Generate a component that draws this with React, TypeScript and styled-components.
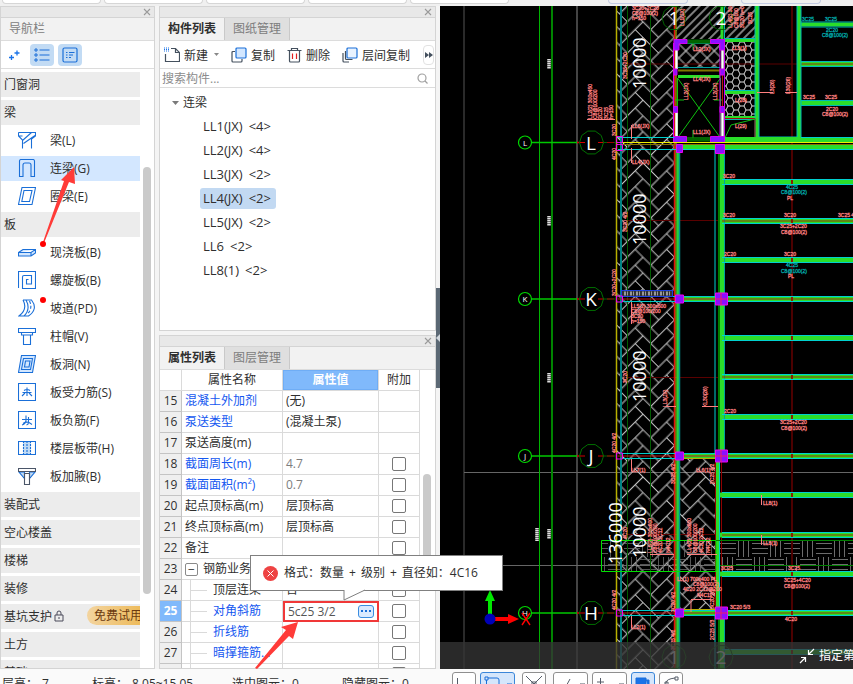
import React from "react";
import styled, { createGlobalStyle, css } from "styled-components";

const GlobalStyle = createGlobalStyle`
  * { box-sizing: border-box; }
  body { margin: 0; background: #f4f4f4; }
  body, button, input {
    font-family: "Open Sans", "Noto Sans CJK SC", sans-serif;
    font-size: 12px;
    color: #2f2f2f;
  }
  button, input { margin: 0; padding: 0; border: 0; background: none; }
`;

/* ---------- page frame ---------- */

const Page = styled.div`
  position: relative;
  display: grid;
  grid-template-rows: 6px minmax(0, 1fr) 15px;
  height: 100vh;
  overflow: hidden;
  line-height: 18px;
`;

const Ribbon = styled.header`
  display: flex;
  gap: 3px;
  padding: 0 0 2px 2px;
  background: #f0f0f0;
  overflow: hidden;
`;

const RibbonCard = styled.div<{ $accent?: boolean; $push?: number }>`
  flex: 0 0 ${(p) => (p.$accent ? 80 : 99)}px;
  margin-left: ${(p) => p.$push ?? 0}px;
  border: 1px solid ${(p) => (p.$accent ? "#c3cbe2" : "#d6d6d6")};
  border-top: 0;
  border-radius: 0 0 4px 4px;
  background: ${(p) => (p.$accent ? "#f0f0f0" : "#fff")};
`;

const Workspace = styled.main`
  display: flex;
  min-height: 0;
`;

const Panel = styled.section`
  display: flex;
  flex-direction: column;
  min-height: 0;
  overflow: hidden;
  border: 1px solid #d4d4d4;
  background: #fff;
`;

const CloseBar = styled.div`
  flex: 0 0 11px;
  display: flex;
  justify-content: flex-end;
  align-items: center;
  padding-right: 3px;
  background: #e8e8e8;
  border-bottom: 1px solid #d4d4d4;
`;

const CloseButton = styled.button`
  display: flex;
  color: #9a9a9a;
`;

function Closer({ label }: { label: string }) {
  return (
    <CloseBar>
      <CloseButton aria-label={label}>
        <svg width="8" height="8" viewBox="0 0 8 8" stroke="currentColor" strokeWidth="1.1">
          <path d="M1 1l6 6M7 1L1 7" />
        </svg>
      </CloseButton>
    </CloseBar>
  );
}

/* ---------- navigation panel ---------- */

const NavPanel = styled(Panel)`
  flex: 0 0 155px;
`;

const NavTitle = styled.h2`
  flex: 0 0 22px;
  margin: 0;
  padding-left: 8px;
  border-bottom: 1px solid #dcdcdc;
  background: #f2f2f2;
  color: #808080;
  font-size: 12px;
  font-weight: 400;
  line-height: 22px;
`;

const NavTools = styled.div`
  flex: 0 0 28px;
  display: flex;
  align-items: center;
  gap: 4px;
  padding-left: 1px;
  border-bottom: 1px solid #dcdcdc;
`;

const NavTool = styled.button<{ $on?: boolean }>`
  display: grid;
  place-items: center;
  width: 24px;
  height: 22px;
  border-radius: 4px;
  background: ${(p) => (p.$on ? "#c2dbf4" : "transparent")};
`;

const NavBody = styled.div`
  flex: 1;
  display: flex;
  min-height: 0;
  overflow: hidden;
`;

const NavList = styled.div`
  flex: 1;
  display: flex;
  flex-direction: column;
  gap: 3px;
  padding-top: 3px;
`;

const NavGroup = styled.button`
  flex: 0 0 25px;
  display: flex;
  align-items: center;
  gap: 2px;
  padding: 0 0 2px 3px;
  overflow: hidden;
  background: #ececec;
  text-align: left;
`;

const NavItem = styled.button<{ $active?: boolean }>`
  flex: 0 0 25px;
  display: flex;
  align-items: center;
  gap: 14px;
  padding: 0 0 2px 17px;
  background: ${(p) => (p.$active ? "#d3e7ff" : "#fff")};
  text-align: left;
`;

const NavIcon = styled.svg`
  width: 18px;
  height: 18px;
  fill: none;
  stroke: #1a6fd8;
  stroke-width: 1.1;
`;

const TrialTag = styled.span`
  margin-left: auto;
  flex: 0 0 53px;
  height: 19px;
  padding-left: 7px;
  border-radius: 10px 0 0 10px;
  background: linear-gradient(90deg, #f3d49f, #edbb5c);
  color: #6b3a10;
  line-height: 19px;
  white-space: nowrap;
  overflow: hidden;
`;

const ScrollTrack = styled.div<{ $top: number; $pad: number }>`
  flex: 0 0 auto;
  padding: ${(p) => p.$top}px ${(p) => p.$pad}px 0 3px;
`;

const ScrollThumb = styled.div<{ $size: number }>`
  width: 8px;
  height: ${(p) => p.$size}px;
  border-radius: 4px;
  background: #cacaca;
`;

const navIcons: Record<string, React.ReactNode> = {
  beam: <path d="M.5 1.500h17v3.500l-4 3v9.500M4.500 17.500V9L.500 5V1.500M4.500 9.500L13.500 1.500M5.500 12.500L17 4.500M.500 5h4" />,
  link: <path d="M1.500 17.500V2q0-1.500 1.500-1.500h12q1.500 0 1.500 1.500v15.500h-3.500V6q0-2-2-2H7q-2 0-2 2v11.500z" />,
  ring: <path d="M4 .5h13.500l-3.500 17H.500zM6 3.500h8l-2.500 11H3.800z" />,
  slab: <path fill="#d3e7ff" d="M.5 9.500L5 6.500h12.500L13 9.500zM.500 9.500v3.500H13l4.500-3V6.500M13 9.500V13" />,
  spiral: <path d="M.5 17V.5h17v17H4.500V6q0-1.500 1.500-1.500h7.500V13H8.500V8.500h2" />,
  ramp: (
    <>
      <path d="M5 1q5 9-4 16h9.500q10-7 3-16H5M8 1q5 9-2 16" />
      <path strokeDasharray="3 2" d="M11.500 2q3.500 7-2 13" />
    </>
  ),
  cap: <path d="M.5 1.500h17v4H.500zM3.500 5.500v2.500h11V5.500M5.500 8v9.500h7V8" />,
  hole: <path fill="#d3e7ff" d="M3.500 .5h14l-3 17H.5zM5.500 3.500h9l-2 11H3.500zM7.500 6h4.500l-1 6H6.500z" />,
  rebarS: <path d="M.5.5h17v17H.5zM4 13l3-3M14 13l-3-3M4.500 9.500h9M6 7.500q3-2 6 0M9 4.500V13" />,
  rebarF: <path d="M.5.5h17v17H.5zM4 8.500h10M4 14q4-1 4-5V4.500M5 12.500q3-2 6-1l3 2M10.500 6v5.500q0 2-2 2.500" />,
  strip: (
    <>
      <path fill="#c2dbf4" stroke="none" d="M5 2.500h8v13H5z" />
      <path d="M4 2.500H.500v13H4M14 2.500h3.500v13H14M.500 2.500h17M.500 15.500h17" />
      <path strokeDasharray="2 1" d="M5.500 2v14M9 2v14M12.500 2v14" />
    </>
  ),
  haunch: (
    <>
      <path fill="#c2dbf4" d="M1 5h5.500v6.500zM17 5h-5.500v6.500z" />
      <path stroke="#4a5568" d="M.5 1.500h17v3H.500zM6.500 6.500v11h5v-11z" />
    </>
  ),
};

type NavEntry = { text: string; icon?: string; active?: boolean; locked?: boolean };

const navEntries: NavEntry[] = [
  { text: "门窗洞" },
  { text: "梁" },
  { text: "梁(L)", icon: "beam" },
  { text: "连梁(G)", icon: "link", active: true },
  { text: "圈梁(E)", icon: "ring" },
  { text: "板" },
  { text: "现浇板(B)", icon: "slab" },
  { text: "螺旋板(B)", icon: "spiral" },
  { text: "坡道(PD)", icon: "ramp" },
  { text: "柱帽(V)", icon: "cap" },
  { text: "板洞(N)", icon: "hole" },
  { text: "板受力筋(S)", icon: "rebarS" },
  { text: "板负筋(F)", icon: "rebarF" },
  { text: "楼层板带(H)", icon: "strip" },
  { text: "板加腋(B)", icon: "haunch" },
  { text: "装配式" },
  { text: "空心楼盖" },
  { text: "楼梯" },
  { text: "装修" },
  { text: "基坑支护", locked: true },
  { text: "土方" },
  { text: "基础" },
];

function Navigation() {
  return (
    <NavPanel aria-label="导航栏">
      <Closer label="关闭导航栏" />
      <NavTitle>导航栏</NavTitle>
      <NavTools>
        <NavTool aria-label="展开">
          <svg width="12" height="12" stroke="#1a73e8" strokeWidth="1.300">
            <path d="M1 8.500h5M3.500 6v5M6.500 4h5M9 1.500v5" />
          </svg>
        </NavTool>
        <NavTool $on aria-label="列表视图">
          <svg width="16" height="14" fill="none" stroke="#1a6fd8" strokeWidth="1.200">
            <path d="M5.500 2h10M5.500 7h10M5.500 12h10" />
            <path d="M1 1h2v2H1zM1 6h2v2H1zM1 11h2v2H1z" strokeWidth="1" />
          </svg>
        </NavTool>
        <NavTool $on aria-label="详细视图">
          <svg width="16" height="16" fill="none" stroke="#1a6fd8" strokeWidth="1.200">
            <rect x="1" y="1" width="14" height="14" rx="1.500" />
            <path d="M4 5.500h1.500M7 5.500h5.500M4 8h1.500M7 8h4M4 10.500h1.500M7 10.500h2" strokeWidth="1" />
          </svg>
        </NavTool>
      </NavTools>
      <NavBody>
        <NavList>
          {navEntries.map((e) =>
            e.icon ? (
              <NavItem key={e.text} $active={e.active}>
                <NavIcon viewBox="0 0 18 18">{navIcons[e.icon]}</NavIcon>
                {e.text}
              </NavItem>
            ) : (
              <NavGroup key={e.text}>
                {e.text}
                {e.locked && (
                  <>
                    <svg width="10" height="12" fill="none" stroke="#4a4a5a">
                      <path d="M1 5h8v6H1zM3 5V3q0-2 2-2t2 2v2M5 7v2" />
                    </svg>
                    <TrialTag>免费试用</TrialTag>
                  </>
                )}
              </NavGroup>
            ),
          )}
        </NavList>
        <ScrollTrack $top={98} $pad={3}>
          <ScrollThumb $size={427} />
        </ScrollTrack>
      </NavBody>
    </NavPanel>
  );
}

/* ---------- component list ---------- */

const MiddleColumn = styled.div`
  flex: 0 0 277px;
  display: grid;
  grid-template-rows: 325px minmax(0, 1fr);
  gap: 4px;
  margin-left: 4px;
`;

const TabBar = styled.div`
  flex: 0 0 23px;
  display: flex;
  border-bottom: 1px solid #dcdcdc;
  background: #f2f2f2;
`;

const Tab = styled.button<{ $active?: boolean }>`
  flex: 0 0 65px;
  border-right: 1px solid #c9c9c9;
  background: ${(p) => (p.$active ? "#f2f2f2" : "#dfdfdf")};
  color: ${(p) => (p.$active ? "#2f2f2f" : "#7d7d7d")};
  font-weight: ${(p) => (p.$active ? 700 : 400)};
  line-height: 22px;
  white-space: nowrap;
`;

const Toolbar = styled.div`
  flex: 0 0 28px;
  display: flex;
  align-items: center;
  gap: 12px;
  padding: 0 1px 0 4px;
  border-bottom: 1px solid #dcdcdc;
`;

const ToolButton = styled.button`
  display: flex;
  align-items: center;
  gap: 4px;
  white-space: nowrap;

  svg { fill: none; stroke: #44505e; stroke-width: 1.2; }
`;

const MoreButton = styled.button`
  display: grid;
  place-items: center;
  width: 11px;
  height: 20px;
  margin-left: auto;
  border: 1px solid #e2e2e2;
  border-radius: 4px;
`;

const SearchRow = styled.label`
  flex: 0 0 19px;
  display: flex;
  align-items: center;
  padding: 0 7px 0 2px;
  border-bottom: 1px solid #dcdcdc;

  input { flex: 1; min-width: 0; outline: 0; }
  input::placeholder { color: #8c8c8c; opacity: 1; }
`;

const Tree = styled.ul`
  display: flex;
  flex-direction: column;
  align-items: flex-start;
  margin: 0;
  padding: 4px 0 0 12px;
  list-style: none;
`;

const TreeRoot = styled.li`
  display: flex;
  align-items: center;
  gap: 4px;
  height: 22px;
  margin-bottom: 2px;
`;

const TreeLeaf = styled.li<{ $active?: boolean }>`
  display: flex;
  gap: 6px;
  height: 21px;
  margin: 0 0 3px 28px;
  padding: 0 5px 0 3px;
  border-radius: 3px;
  background: ${(p) => (p.$active ? "#c2d9f2" : "transparent")};
  font-size: 13px;
  line-height: 21px;
`;

const components = [
  ["LL1(JX)", "<4>"],
  ["LL2(JX)", "<4>"],
  ["LL3(JX)", "<2>"],
  ["LL4(JX)", "<2>"],
  ["LL5(JX)", "<2>"],
  ["LL6", "<2>"],
  ["LL8(1)", "<2>"],
];

function ComponentList() {
  return (
    <Panel aria-label="构件列表">
      <Closer label="关闭构件列表" />
      <TabBar>
        <Tab $active>构件列表</Tab>
        <Tab>图纸管理</Tab>
      </TabBar>
      <Toolbar>
        <ToolButton>
          <svg width="16" height="16" viewBox="0 0 16 16">
            <path d="M7 1.500h4.500l4 4v9h-14V7M11.500 1.500v4h4" />
            <path stroke="#1a73e8" strokeDasharray="1 1" d="M0 1h5M0 2.500h5M0 4h5" />
          </svg>
          新建
          <svg width="7" height="4" viewBox="0 0 7 4">
            <path d="M2 0h5L4.500 3z" fill="#888" stroke="none" />
          </svg>
        </ToolButton>
        <ToolButton>
          <svg width="16" height="16" viewBox="0 0 16 16">
            <path d="M4 4.500H2q-1 0-1 1V14q0 1 1 1h8q1 0 1-1v-2" />
            <rect x="5" y="1" width="10" height="10" rx="1" fill="#d3e7ff" stroke="#1a6fd8" />
          </svg>
          复制
        </ToolButton>
        <ToolButton>
          <svg width="15" height="16" viewBox="0 0 15 16">
            <path d="M.5 3.500h14M4.500 3.500v-2h6v2M2.500 3.500V14q0 1 1 1h8q1 0 1-1V3.500" />
            <path stroke="#e02020" d="M5.500 6.500v5.500M9.500 6.500v5.500" />
          </svg>
          删除
        </ToolButton>
        <ToolButton>
          <svg width="16" height="16" viewBox="0 0 16 16">
            <path d="M1 6v8q0 1 1 1h5M3.500 4v7.500q0 1 1 1h6" />
            <rect x="5" y="1" width="10" height="10" rx="1" fill="#e9f3ff" stroke="#1a6fd8" />
          </svg>
          层间复制
        </ToolButton>
        <MoreButton aria-label="更多">
          <svg width="8" height="6" fill="#44505e">
            <path d="M0 0l4 3-4 3zM4 0l4 3-4 3z" />
          </svg>
        </MoreButton>
      </Toolbar>
      <SearchRow>
        <input aria-label="搜索构件" placeholder="搜索构件..." />
        <svg width="11" height="11" fill="none" stroke="#a0a0a0" strokeWidth="1.200">
          <circle cx="5" cy="5" r="4" />
          <path d="M8 8l2.500 2.500" />
        </svg>
      </SearchRow>
      <Tree>
        <TreeRoot>
          <svg width="7" height="4" fill="#7a7a7a">
            <path d="M0 0h7L3.500 4z" />
          </svg>
          连梁
        </TreeRoot>
        {components.map(([name, count]) => (
          <TreeLeaf key={name} $active={name === "LL4(JX)"}>
            <span>{name}</span>
            <span>{count}</span>
          </TreeLeaf>
        ))}
      </Tree>
    </Panel>
  );
}

/* ---------- property table ---------- */

const TableArea = styled.div`
  flex: 1;
  display: flex;
  min-height: 0;
  overflow: hidden;
`;

const PropTable = styled.table`
  flex: 1;
  height: max-content;
  table-layout: fixed;
  border-collapse: separate;
  border-spacing: 0;

  tr { height: 21px; }
  th, td {
    height: 21px;
    padding: 0 3px;
    border-right: 1px solid #dadada;
    border-bottom: 1px solid #dadada;
    font-weight: 400;
    line-height: 18px;
    text-align: left;
    white-space: nowrap;
    overflow: hidden;
  }
  thead th { text-align: center; }
`;

const ValueHead = styled.th`
  && {
    background: #80b9fb;
    color: #fff;
    font-weight: 700;
    box-shadow: inset 0 0 0 1px #6fadf5;
  }
`;

const IndexCell = styled.th<{ $active?: boolean }>`
  && {
    padding: 0;
    text-align: center;
    border-color: #c4c4c4;
    background: #efefef;
    ${(p) =>
      p.$active &&
      css`
        background: #80b9fb;
        color: #fff;
        font-weight: 700;
      `}
  }
`;

const NameCell = styled.td<{ $blue?: boolean; $child?: boolean }>`
  && {
    padding-left: ${(p) => (p.$child ? 8 : 3)}px;
    color: ${(p) => (p.$blue ? "#1457f0" : "#2f2f2f")};
    line-height: ${(p) => (p.$child ? 20 : 18)}px;
    text-overflow: ellipsis;
  }
`;

const Branch = styled.span`
  display: inline-block;
  width: 17px;
  height: 20px;
  margin-right: 6px;
  border-left: 1px solid #dadada;
  vertical-align: top;
  background: linear-gradient(#dadada, #dadada) center / 100% 1px no-repeat;
`;

const Fold = styled.button`
  width: 13px;
  height: 13px;
  margin-right: 5px;
  border: 1px solid #8a8a8a;
  border-radius: 2px;
  line-height: 10px;
  vertical-align: middle;
`;

const ValueCell = styled.td<{ $muted?: boolean; $editing?: boolean }>`
  && {
    color: ${(p) => (p.$muted ? "#7d7d7d" : "#2f2f2f")};
    ${(p) =>
      p.$editing &&
      css`
        padding: 0;
        outline: 2px solid #f03838;
        outline-offset: -2px;
      `}
  }
`;

const Editor = styled.div`
  display: flex;
  align-items: center;
  justify-content: space-between;
  height: 20px;
  padding: 0 4px 0 5px;

  input { width: 64px; height: 18px; outline: 0; color: #555; }
`;

const DotsButton = styled.button`
  display: grid;
  place-items: center;
  width: 16px;
  height: 13px;
  border: 1px solid #3a8de0;
  border-radius: 3px;
  background: #d9eaff;
`;

const CheckCell = styled.td`
  && { text-align: center; line-height: 0; }
`;

const Check = styled.input`
  appearance: none;
  width: 14px;
  height: 14px;
  border: 1px solid #777;
  border-radius: 2px;
  background: #fff;
  vertical-align: middle;
`;

type Prop = { n: number; name: string; value?: string; blue?: boolean; muted?: boolean; check?: boolean; level?: "group" | "child" };

const props: Prop[] = [
  { n: 15, name: "混凝土外加剂", value: "(无)", blue: true },
  { n: 16, name: "泵送类型", value: "(混凝土泵)", blue: true },
  { n: 17, name: "泵送高度(m)" },
  { n: 18, name: "截面周长(m)", value: "4.7", blue: true, muted: true, check: true },
  { n: 19, name: "截面面积(m²)", value: "0.7", blue: true, muted: true, check: true },
  { n: 20, name: "起点顶标高(m)", value: "层顶标高", check: true },
  { n: 21, name: "终点顶标高(m)", value: "层顶标高", check: true },
  { n: 22, name: "备注", check: true },
  { n: 23, name: "钢筋业务属性", level: "group" },
  { n: 24, name: "顶层连梁", value: "否", level: "child", check: true },
  { n: 25, name: "对角斜筋", value: "5c25 3/2", blue: true, level: "child", check: true },
  { n: 26, name: "折线筋", blue: true, level: "child", check: true },
  { n: 27, name: "暗撑箍筋...", blue: true, level: "child", check: true },
  { n: 28, name: "", level: "child", check: true },
];

function PropertyPanel() {
  return (
    <Panel aria-label="属性列表">
      <Closer label="关闭属性列表" />
      <TabBar>
        <Tab $active>属性列表</Tab>
        <Tab>图层管理</Tab>
      </TabBar>
      <TableArea>
        <PropTable>
          <colgroup>
            <col width="22" />
            <col width="101" />
            <col width="96" />
            <col width="41" />
          </colgroup>
          <thead>
            <tr>
              <th />
              <th>属性名称</th>
              <ValueHead>属性值</ValueHead>
              <th>附加</th>
            </tr>
          </thead>
          <tbody>
            {props.map((p) => (
              <tr key={p.n}>
                <IndexCell $active={p.n === 25}>{p.n < 28 ? p.n : ""}</IndexCell>
                <NameCell $blue={p.blue} $child={p.level === "child"}>
                  {p.level === "group" && <Fold aria-label="折叠">−</Fold>}
                  {p.level === "child" && <Branch />}
                  {p.name}
                </NameCell>
                <ValueCell $muted={p.muted} $editing={p.n === 25}>
                  {p.n === 25 ? (
                    <Editor>
                      <input aria-label={p.name} defaultValue={p.value} />
                      <DotsButton aria-label="更多选项">
                        <svg width="10" height="2" fill="#1a6fd8">
                          <path d="M0 0h2v2H0zM4 0h2v2H4zM8 0h2v2H8z" />
                        </svg>
                      </DotsButton>
                    </Editor>
                  ) : (
                    p.value
                  )}
                </ValueCell>
                <CheckCell>{p.check && <Check type="checkbox" aria-label={`附加 ${p.name}`} />}</CheckCell>
              </tr>
            ))}
          </tbody>
        </PropTable>
        <ScrollTrack $top={104} $pad={4}>
          <ScrollThumb $size={110} />
        </ScrollTrack>
      </TableArea>
    </Panel>
  );
}

/* ---------- drawing ---------- */

const Splitter = styled.div`
  flex: 0 0 4px;
  display: flex;
  align-items: center;
  background: #f4f4f4;
`;

const SplitHandle = styled.button`
  display: grid;
  place-items: center;
  width: 4px;
  height: 100px;
  background: #5b6874;
`;

const Viewport = styled.section`
  position: relative;
  flex: 1;
  min-width: 0;
  overflow: hidden;
  background: #000;
`;

const Drawing = styled.svg`
  display: block;
  width: 100%;
  height: 100%;
`;

const HintBar = styled.div`
  position: absolute;
  inset: auto 0 0 0;
  display: flex;
  justify-content: flex-end;
  align-items: center;
  gap: 4px;
  height: 27px;
  background: rgba(52, 52, 52, 0.78);
  color: #fff;
  overflow: hidden;

  span { flex: 0 0 34px; white-space: nowrap; overflow: hidden; }
`;

const CadText = styled.text<{ $teal?: boolean }>`
  font-family: "Liberation Sans", sans-serif;
  font-size: 5px;
  fill: ${(p) => (p.$teal ? "#00a8a8" : "#ff8080")};
  stroke: ${(p) => (p.$teal ? "#00a8a8" : "#ff8080")};
  stroke-width: 0.3px;
`;

const Dimension = styled.text`
  font-family: "Open Sans", sans-serif;
  font-size: 18px;
  font-weight: 400;
  fill: #fff;
`;

const AxisName = styled.text<{ $small?: boolean }>`
  font-family: "Open Sans", sans-serif;
  font-size: ${(p) => (p.$small ? 8 : 19)}px;
  fill: #fff;
  text-anchor: middle;
`;

/* Herringbone paving: each brick covers two cells of a W-sized grid. One spare
   cell is drawn around the tile so that strokes on its edges keep full width. */
const W = 11.1;
const herringbone = (() => {
  let d = "";
  for (let x = -1; x < 5; x++)
    for (let y = -1; y < 5; y++) {
      const k = (x - y + 8) % 4;
      if (k !== 2) d += `M${x * W} ${y * W}h${W}`;
      if (k !== 1) d += `M${x * W} ${y * W}v${W}`;
    }
  return d;
})();

const axes: [string, number][] = [["L", 142.5], ["K", 299], ["J", 456], ["H", 613]];
const beamRows = [182, 221, 260, 299, 338, 377, 417, 456, 495, 535, 574, 613, 652];

function decagon(cx: number, cy: number, r: number) {
  return Array.from({ length: 10 }, (_, i) => {
    const a = (Math.PI * 2 * i) / 10;
    return `${cx + r * Math.cos(a)},${cy + r * Math.sin(a)}`;
  }).join(" ");
}

type Note = [number, number, string, boolean?];
const notes: Note[] = [
  [632, 10, "3C20+2C20"], [632, 15, "C8@100(2)"], [632, 20, "h=150"],
  [632, 128, "LL6(JX)"], [632, 164, "LL4(JX)"],
  [631, 308, "LL5(2) 300x600"], [631, 313, "C8@100/200"], [631, 318, "3C20"], [631, 323, "h=150"],
  [631, 472, "LL7(1)"], [631, 629, "LL2(1)"],
  [693, 51, "LL2(JX)"], [693, 81, "LL4(JX)"], [693, 134, "LL1(JX)"], [696, 472, "LL6(1)"],
  [732, 50, "LL3(1)"], [735, 102, "L(28)"], [735, 128, "L(29)"],
  [802, 21, "3C25", true], [825, 21, "3C25", true], [826, 32, "2C20", true], [822, 37, "C8@100(2)", true],
  [803, 99, "3C25"], [825, 99, "3C25"], [826, 111, "2C20"], [822, 116, "C8@100(2)"],
  [723, 178, "3C20"], [786, 189, "4C25", true], [781, 194, "C8@100(2)", true], [787, 200, "PL"],
  [723, 217, "3C20"], [784, 217, "3C20"], [838, 217, "3C25 4/2"],
  [780, 228, "3C25+2C20"], [781, 234, "C8@100(2)"],
  [724, 256, "2C20"], [784, 256, "3C20"], [786, 267, "4C25", true], [781, 273, "C8@100(2)", true], [788, 278, "PL"],
  [724, 413, "2C20"], [780, 424, "3C25+2C20"], [781, 430, "C8@100(2)"],
  [763, 505, "LL8(1)"], [763, 545, "LL8(1)"],
  [721, 570, "3C25"], [788, 570, "3C25"], [784, 582, "3C25+4C20"], [784, 588, "C8@100(2)"],
  [730, 609, "3C20 5/3"], [785, 621, "4C20"],
  [677, 581, "LL(1) 700x400 PL"], [693, 586, "C8@100(2)"], [683, 591, "4C20 2C12@200"], [697, 597, "N4C12"],
];
const rotatedNotes: Note[] = [
  [592, 119, "LL2(2) 300x450"], [597, 119, "C8@100/200"], [602, 119, "2C20"], [608, 119, "3C25"], [613, 119, "h=150"],
  [616, 136, "3C20"], [616, 160, "4C20"], [627, 79, "3C25+2C20"], [627, 232, "3C20 4/2"],
  [616, 296, "3C20+2C20"], [616, 453, "4C20 4/2"], [616, 610, "4C20 4/2"],
  [627, 383, "3C20"], [627, 539, "4C20"],
  [684, 26, "LL1(JX)"], [732, 28, "LL4(2) 300"], [738, 28, "C8@100"], [744, 28, "3C20 h=0"], [752, 24, "3C25"],
  [688, 100, "LL2(JX)"], [717, 100, "LL2(JX)"], [774, 94, "L3(26)"], [790, 94, "L30(26)"],
  [667, 407, "LL3(JX)"], [707, 407, "KL30(26)"],
  [675, 484, "3C25 4/2"], [714, 484, "2C25 4/2"], [675, 612, "3C20 4/2"], [714, 609, "3C20 2/2"], [714, 640, "2C25 5/3"], [675, 650, "3C25 4/2"],
  [652, 553, "LL1(2) 300x600"], [657, 553, "C8@100/200"], [662, 553, "4C20 2C12"], [670, 553, "N4C12"],
  [691, 553, "LL4(2) 300x600"], [697, 553, "C8@100/200"], [703, 553, "4C20 2C12"], [710, 553, "N4C12"],
];

function Canvas() {
  return (
    <Viewport aria-label="绘图区">
      <Drawing viewBox="440 6 413 663" preserveAspectRatio="xMinYMin slice" fill="none">
        <defs>
          <pattern id="herring" width={W * 4} height={W * 4} patternUnits="userSpaceOnUse" patternTransform="translate(643 6) rotate(45)">
            <path d={herringbone} stroke="#c4c4c4" strokeWidth="1.100" />
          </pattern>
          <pattern id="diag" width="6" height="6" patternUnits="userSpaceOnUse" patternTransform="rotate(45)">
            <path d="M1 0v6" stroke="#d0d0d0" strokeWidth="1.200" />
          </pattern>
          <pattern id="cross" width="10" height="10" patternUnits="userSpaceOnUse" patternTransform="rotate(45)">
            <path d="M1 0v10M0 1h10" stroke="#c8c8c8" strokeWidth="1.200" />
          </pattern>
          <pattern id="comb" x="724" y="42" width="12" height="8" patternUnits="userSpaceOnUse">
            <path d="M0 4h2l2-4h4l2 4h2M2 4l2 4h4l2-4" stroke="#d8d8d8" />
          </pattern>
          <pattern id="weave" x="720" y="541" width="32" height="32" patternUnits="userSpaceOnUse">
            <path d="M0 2.500h16M0 7.500h16M0 12.500h16M18.500 0v16M23.500 0v16M28.500 0v16M2.500 16v16M7.500 16v16M12.500 16v16M16 18.500h16M16 23.500h16M16 28.500h16" stroke="#6c6c6c" />
          </pattern>
        </defs>

        {/* guide lines */}
        <path d="M464 6v663" stroke="#555" />
        <path d="M577 6v663" stroke="#444" strokeWidth="2" />
        <path d="M464 472.500h389M440 565.500h413" stroke="#666" />
        <path d="M539.500 6v663" stroke="#00b400" />
        <path d="M552 6v663" stroke="#008400" strokeWidth="2" />

        {/* hatched slab strips */}
        <rect x="617" y="6" width="58" height="663" fill="url(#herring)" />
        <rect x="680" y="458" width="36" height="152" fill="url(#herring)" />
        <rect x="601" y="541" width="115" height="31" fill="url(#weave)" opacity="0.800" />
        <rect x="720" y="541" width="133" height="31" fill="url(#weave)" />
        <rect x="676" y="6" width="46" height="33" fill="url(#diag)" />
        <rect x="725" y="6" width="30" height="33" fill="url(#diag)" />
        <rect x="678" y="43" width="42" height="25" fill="url(#cross)" />
        <rect x="725" y="42" width="30" height="74" fill="url(#comb)" />

        {/* faint span lines */}
        <path d="M792 6v663" strokeWidth="2" stroke="#4c0000" />
        <path d="M627 64h226M627 220.500h226M627 377.500h226M627 534.500h226" stroke="#5a0000" />

        {/* strip edges */}
        <path d="M616.500 6v663" stroke="#b8b000" strokeWidth="1.500" />
        <path d="M621 6v663" stroke="#008484" strokeWidth="2" />
        <path d="M627.500 6v663M650.500 6v663" stroke="#005c00" />
        <path d="M674.500 6v663" stroke="#e01010" strokeWidth="1.500" />
        <path d="M676 6v663" stroke="#c8c800" />
        <path d="M677.800 149v520" stroke="#1fd43c" strokeWidth="2.500" />
        <path d="M679.500 149v520M715 149v309M715 613v56" stroke="#008c8c" strokeWidth="1.500" />
        <path d="M719 149v309M719 613v56" stroke="#008000" strokeWidth="2" />
        <path d="M722 149v309M722 613v56" stroke="#2ade2a" strokeWidth="4" />
        <path d="M724.500 149v309M724.500 613v56" stroke="#00a0a0" />
        <path d="M717.500 458v155" stroke="#2ade2a" strokeWidth="4" />
        <path d="M719.500 458v155" stroke="#00c8c8" />
        <path d="M721.500 458v155M715.500 458v155" stroke="#900000" />

        {/* right-hand beams */}
        {beamRows.map((y, i) => (
          <g key={y}>
            <path d={`M${y > 458 && y < 613 ? 720 : 725} ${y}H853`} stroke="#2ade2a" strokeWidth="5" />
            {i % 2 === 1 && <path d={`M722 ${y}H853`} stroke="#9a3000" />}
            <path d={`M722 ${y - 2.5}H853M722 ${y + 2.5}H853`} stroke="#00d0d0" />
            <path d={`M791 ${y}h2`} stroke="#8a2000" strokeWidth="4" />
          </g>
        ))}
        <path d="M601.500 540.500H716v31H601.500z" stroke="#00e000" />
        <path d="M716 540.500h137M720 565.500h133" stroke="#008000" />

        {/* stair core */}
        <g stroke="#2ade2a" strokeWidth="3">
          <path d="M757 6v132M799 6v132" strokeWidth="4" />
          <path d="M725 40.500h31M725 92.500h31M725 117.500h31M678 76.500h42M722 6v34" />
          <path d="M801 24.500h52M801 64h52M801 103h52" strokeWidth="4" />
        </g>
        <path d="M801 64h52" stroke="#9a3000" />
        <path d="M755 6v132M759 6v131h38V6M801 22h52M801 27h52M801 61.500h52M801 66.500h52M801 100.500h52M801 105.500h52M724.500 6v131M801 6v132M725 38.500h30M725 90.500h30M725 119.500h30" stroke="#00b8b8" />
        <path d="M678 70.500h42" stroke="#807800" strokeWidth="2" />
        <path d="M678 67.500h42M678 43.500h42" stroke="#00a0a0" />
        <path d="M677.500 78v60h43V78l-43 60M677.500 78l43 60M675 100h9M714 100h9M693 41v9M693 130v8" stroke="#10c010" />
        <path d="M687 41.500h24M687 139.500h24" stroke="#006400" strokeWidth="4" />
        <path d="M725 118.500h30v19h-30" stroke="#a01010" />
        <path d="M725 138l6-13 24-6" stroke="#10c010" />
        <path d="M722.500 43v94" stroke="#c01010" />
        <path d="M676.500 48v21M676.500 112v24M722.500 48v21M722.500 112v24" stroke="#fff" strokeWidth="2.500" />
        <g fill="#8a10ff" stroke="#d000f0">
          <path d="M674 39.500h13v4h-8V50h-5zM724.500 39.500h-14v4h9V50h5zM674 69h3v6h-3zM720 69h4.500v6H720zM673.500 106.500h4v6h-4zM720 106.500h4.500v6H720z" />
          <path d="M673.500 136.500h13v6h-13zM710.500 136.500h14v6h-14z" />
        </g>
        <path d="M673.500 43v94M720 43v94M724.500 43v94" stroke="#d000f0" />

        {/* main axis beam */}
        <path d="M725 139.500h128" stroke="#2ade2a" strokeWidth="5" />
        <path d="M680 147h173" stroke="#2ade2a" strokeWidth="4" />
        <path d="M618 137.500h56M618 149.500h235M801 137.500h52" stroke="#00d0d0" />
        <path d="M618 142.500h235" stroke="#f0f000" />
        <path d="M618 144.500h235" stroke="#8a7000" />

        {/* cross-strip axes */}
        {[299, 456, 613].map((y) => (
          <g key={y}>
            <path d={`M683 ${y}h32`} stroke="#2ade2a" strokeWidth="4" />
            <path d={`M622 ${y - 2.5}h93M622 ${y + 2.5}h93`} stroke="#00c8c8" />
            <path d={`M618 ${y}h108`} stroke="#c01010" />
          </g>
        ))}
        <path d="M676 458.500h40M676 609.500h40" stroke="#b8b000" />
        <rect x="621.500" y="290.500" width="51" height="6" fill="#333" stroke="#2040e0" />
        <path d="M624 293.500h46" stroke="#999" strokeWidth="4" strokeDasharray="2 1 1 2" />

        {/* axis bubbles */}
        {axes.map(([name, y]) => (
          <g key={name}>
            <path d={`M532 ${y}h45`} stroke="#00c800" strokeWidth="1.300" />
            <path d={`M577 ${y}h3M582 ${y}h22`} stroke="#d00000" strokeWidth="1.300" />
            <path d={`M604 ${y}h12`} stroke="#006400" />
            <path d={`M607 ${y}h7`} stroke="#a00000" />
            <circle cx="525" cy={y} r="6.500" stroke="#00d800" strokeWidth="1.200" fill="#000" />
            <AxisName $small x="525" y={y + 3}>{name}</AxisName>
            <polygon points={decagon(591.5, y, 12)} stroke="#007000" fill="#000" />
            <path d={`M580 ${y}h5M598 ${y}h5`} stroke="#d00000" />
            <AxisName x="591" y={y + 7}>{name}</AxisName>
          </g>
        ))}
        {[["1", 674], ["2", 721]].map(([n, x]) => (
          <g key={n}>
            {[18, 657].map((y) => (
              <g key={y}>
                <polygon points={decagon(Number(x), y, 12)} stroke="#006000" />
                <AxisName x={x} y={y + 7}>{n}</AxisName>
              </g>
            ))}
          </g>
        ))}

        {/* columns */}
        <g stroke="#f000f0">
          <path d="M616.500 136.500h6v6h-6zM616.500 144.500h6v6h-6zM616.500 296h6v6h-6zM616.500 453h6v6h-6zM616.500 610h6v6h-6z" />
          <g fill="#8a10ff">
            <path d="M676.500 144.500h6v8h-6zM715.500 144.500h9v9h-9z" />
            {[299, 456, 613].map((y) => (
              <path key={y} d={`M675.500 ${y - 4}h8v8h-8zM715.500 ${y - 6}h12v12h-12z`} />
            ))}
          </g>
        </g>
        <path d="M715 299h12M721 293v12M715 456h12M721 450v12M715 613h12M721 607v12" stroke="#f02060" />

        {/* annotations */}
        <path d="M631.500 125v14M631.500 148v15M631.500 302v22M631.500 459v12M631.500 616v12M587 119.500h28M757 92.500h16M785 92.500h12M667 406.500h9M702 406.500h16M761.500 495v10M761.500 535v10M650 554.500h24M687 554.500h30M691 600v12M691 599.500h20" stroke="#ff7f7f" />
        {notes.map(([x, y, t, isTeal], i) => (
          <CadText key={i} x={x} y={y} $teal={isTeal}>{t}</CadText>
        ))}
        {rotatedNotes.map(([x, y, t], i) => (
          <CadText key={i} x={x} y={y} transform={`rotate(-90 ${x} ${y})`}>{t}</CadText>
        ))}
        {[89, 245, 402, 558].map((y) => (
          <Dimension key={y} x="646" y={y} transform={`rotate(-90 646 ${y})`}>10000</Dimension>
        ))}
        <Dimension x="622" y="564" transform="rotate(-90 622 564)">136000</Dimension>
        <path d="M549 59v10M549 216v10M549 373v10M549 529v10M537 528v13" stroke="#ddd" strokeWidth="3.500" strokeDasharray="1.500 .5" />

        {/* coordinate marker */}
        <path d="M490 619v-18" stroke="#00e800" strokeWidth="4" />
        <path d="M485 601l5-11 5 11z" fill="#00e800" />
        <path d="M492 619h18" stroke="#f00" strokeWidth="4" />
        <path d="M508 614l11 5-11 5z" fill="#f00" />
        <path d="M522 613l8 12M530 613l-8 12" stroke="#f00" strokeWidth="1.400" />
        <circle cx="490" cy="619" r="5.500" fill="#0000b8" />
      </Drawing>
      <HintBar>
        <svg width="16" height="16" fill="none" stroke="#fff" strokeWidth="1.200">
          <path d="M15 1L9.500 6.500M9.500 2v4.500H14M1 15l5.500-5.500M2 9.500h4.500V14" />
        </svg>
        <span>指定第一个角点</span>
      </HintBar>
    </Viewport>
  );
}

/* ---------- status bar ---------- */

const Status = styled.footer`
  display: grid;
  grid-template-columns: 90px 140px 110px 108px minmax(0, 1fr);
  align-items: start;
  padding-left: 2px;
  background: #fafafa;
  overflow: hidden;
  white-space: nowrap;
`;

const StatusItem = styled.span<{ $gap: number }>`
  display: flex;
  gap: ${(p) => p.$gap}px;
  padding-top: 6px;
`;

const StatusTools = styled.div`
  display: flex;
  gap: 4px;
  padding: 3px 0 0 2px;
`;

const StatusTool = styled.button<{ $on?: boolean; $wide?: boolean; $sep?: boolean }>`
  flex: 0 0 ${(p) => (p.$wide ? 35 : 24)}px;
  min-width: 0;
  height: 24px;
  margin-left: ${(p) => (p.$sep ? 3 : 0)}px;
  border: 1px solid ${(p) => (p.$on ? "#3b86d8" : "#8f8f8f")};
  border-radius: 3px;
  background: ${(p) => (p.$on ? "#d5e6fb" : "#fff")};
  text-align: left;
  overflow: hidden;

  svg { display: block; fill: none; stroke: #555c68; }
`;

type StatusEntry = { label: string; d: string; on?: boolean; wide?: boolean; sep?: boolean };

const caret = "M26 11h5l-2.500 2z";
const statusTools: StatusEntry[] = [
  { label: "直角", d: "M4.500 5v12h12" },
  { label: "矩形", d: "M4 4h3v3H4zM7 5h9q2 0 2 2v12M5.500 7v12" + caret, on: true, wide: true },
  { label: "交点", d: "M3 3l8 8 8-8M11 11v9M9 9h4v4H9z", sep: true },
  { label: "垂点", d: "M7 14l3 3 6-11" + caret, wide: true, sep: true },
  { label: "偏移", d: "M4 9h7M7.500 5v8" + caret, wide: true },
  { label: "图层", d: "M4 5h10v12H4zM14 7h3v10", on: true },
  { label: "曲线", d: "M6 18V10q0-4 9-5M5 9h3v3H5zM15 4h3v3h-3z" },
];

/* ---------- callouts ---------- */

const Tip = styled.div`
  position: absolute;
  left: 250px;
  top: 555px;
  display: flex;
  align-items: center;
  gap: 5px;
  height: 36px;
  padding: 0 24px 0 12px;
  border: 1px solid #808080;
  background: #fff;
  white-space: nowrap;

  span:first-of-type { margin-left: 1px; }
`;

const Marks = styled.svg`
  position: absolute;
  left: 0;
  top: 0;
  pointer-events: none;
`;

export default function App() {
  return (
    <Page>
      <GlobalStyle />
      <Ribbon>
        <RibbonCard />
        <RibbonCard />
        <RibbonCard />
        <RibbonCard />
        <RibbonCard />
        <RibbonCard $accent $push={96} />
        <RibbonCard $accent $push={50} />
      </Ribbon>
      <Workspace>
        <Navigation />
        <MiddleColumn>
          <ComponentList />
          <PropertyPanel />
        </MiddleColumn>
        <Splitter>
          <SplitHandle aria-label="折叠面板">
            <svg width="4" height="8" fill="#d0d6dc">
              <path d="M4 0v8L0 4z" />
            </svg>
          </SplitHandle>
        </Splitter>
        <Canvas />
      </Workspace>
      <Status>
        <StatusItem $gap={4}><span>层高：</span><span>7</span></StatusItem>
        <StatusItem $gap={4}><span>标高：</span><span>8.05~15.05</span></StatusItem>
        <StatusItem $gap={0}><span>选中图元：</span><span>0</span></StatusItem>
        <StatusItem $gap={0}><span>隐藏图元：</span><span>0</span></StatusItem>
        <StatusTools>
          {statusTools.map((t) => (
            <StatusTool key={t.label} aria-label={t.label} $on={t.on} $wide={t.wide} $sep={t.sep}>
              <svg width="34" height="22">
                <path
                  d={t.d}
                  fill={t.label === "图层" ? "#1a73e8" : "none"}
                  stroke={t.on ? "#1a6fd8" : "#555c68"}
                />
              </svg>
            </StatusTool>
          ))}
        </StatusTools>
      </Status>
      <Tip role="alert">
        <svg width="15" height="15" viewBox="0 0 15 15">
          <circle cx="7.500" cy="7.500" r="7.500" fill="#ee4343" />
          <path d="M4.500 4.500l6 6M10.500 4.500l-6 6" stroke="#fff" />
        </svg>
        <span>格式：数量</span>
        <span>+</span>
        <span>级别</span>
        <span>+</span>
        <span>直径如：4C16</span>
      </Tip>
      <Marks width="520" height="684">
        <path d="M344 590v10l21-10" fill="#fff" stroke="#808080" />
        <path d="M74 167l1 17-6-2-25 61-1-1 21-61-3-1z" fill="#ff3b38" />
        <path d="M298 622l-5 17-4-3-32 33-2-1 31-38-5-3z" fill="#ff3b38" />
        <circle cx="43" cy="244" r="3" fill="#f00" />
        <circle cx="43" cy="300" r="3" fill="#f00" />
      </Marks>
    </Page>
  );
}
